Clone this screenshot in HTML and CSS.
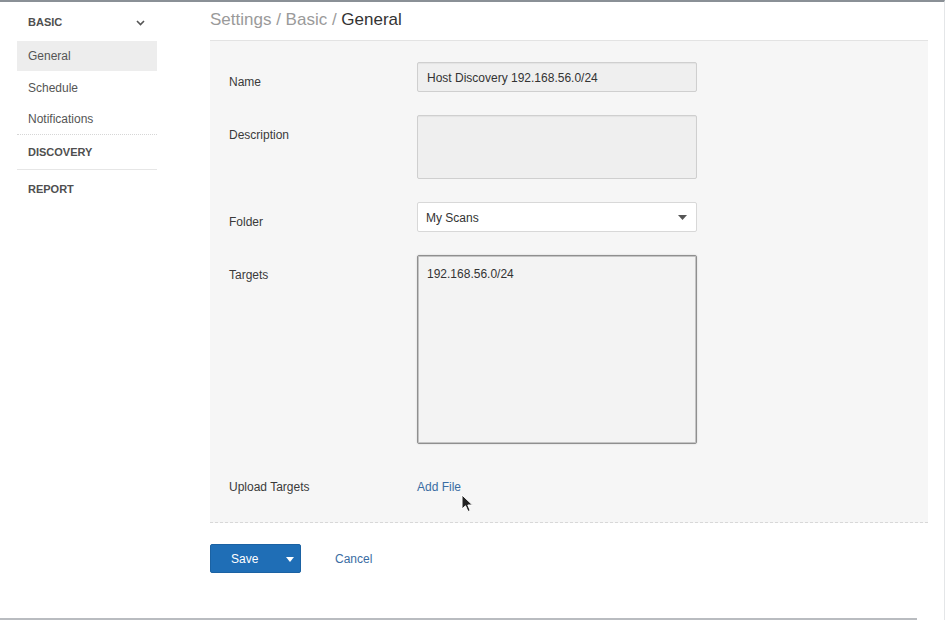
FILE: index.html
```html
<!DOCTYPE html>
<html>
<head>
<meta charset="utf-8">
<link rel="stylesheet" href="styles.css">
</head>
<body>
<div class="frame">
  <div class="layout">
    <aside class="sidebar">
      <div class="sec-head top">
        <span>BASIC</span>
        <svg class="chev" width="9" height="6" viewBox="0 0 9 6"><path d="M1 1 L4.5 4.5 L8 1" fill="none" stroke="#555" stroke-width="1.6"/></svg>
      </div>
      <ul class="nav">
        <li class="active">General</li>
        <li>Schedule</li>
        <li>Notifications</li>
      </ul>
      <div class="sec-head sep">DISCOVERY</div>
      <div class="sec-head sep2">REPORT</div>
    </aside>
    <main class="main">
      <h1 class="crumbs"><span class="dim">Settings / Basic / </span>General</h1>
      <section class="panel">
        <div class="row">
          <label class="lbl">Name</label>
          <div class="field input ro">Host Discovery 192.168.56.0/24</div>
        </div>
        <div class="row">
          <label class="lbl">Description</label>
          <div class="field textarea ro desc"></div>
        </div>
        <div class="row">
          <label class="lbl">Folder</label>
          <div class="field input select">
            <span>My Scans</span>
            <svg width="9" height="5" viewBox="0 0 9 5"><path d="M0 0 H9 L4.5 5 Z" fill="#555"/></svg>
          </div>
        </div>
        <div class="row">
          <label class="lbl">Targets</label>
          <div class="field textarea targets">192.168.56.0/24</div>
        </div>
        <div class="row">
          <label class="lbl">Upload Targets</label>
          <a class="link addfile">Add File</a>
        </div>
      </section>
      <div class="actions">
        <button class="btn-save"><span>Save</span><svg width="8" height="5" viewBox="0 0 8 5"><path d="M0 0 H8 L4 5 Z" fill="#fff"/></svg></button>
        <a class="link cancel">Cancel</a>
      </div>
    </main>
  </div>
  <div class="bottom-bar"></div>
  <svg class="cursor" width="13" height="20" viewBox="0 0 13 20"><path d="M1 1 L1 15 L4.5 11.8 L7 17.5 L9.2 16.5 L6.8 11 L11.5 11 Z" fill="#222" stroke="#fff" stroke-width="1"/></svg>
</div>
</body>
</html>
```
FILE: styles.css
```css
* { box-sizing: border-box; }
html, body { margin: 0; padding: 0; background: #fff; }
body {
  font-family: "Liberation Sans", Arial, sans-serif;
  font-size: 12px;
  color: #333;
}
.frame {
  position: relative;
  width: 945px;
  height: 620px;
  border-top: 2px solid #8a9096;
  border-right: 1px solid #e4e6e8;
  display: flex;
  flex-direction: column;
  overflow: hidden;
}
.layout {
  display: flex;
  flex: 1;
}
.sidebar {
  width: 157px;
  padding-left: 17px;
  flex: none;
}
.sec-head {
  height: 39px;
  padding-left: 11px;
  padding-right: 12px;
  display: flex;
  align-items: center;
  justify-content: space-between;
  font-size: 11px;
  font-weight: bold;
  color: #4f4f4f;
}
.sec-head.top { padding-top: 1px; }
.sec-head.sep {
  height: 36px;
  padding-top: 0;
  border-top: 1px dotted #d6d6d6;
  border-bottom: 1px solid #e6e6e6;
}
.sec-head.sep2 { height: 36px; padding-top: 2px; }
.chev { margin-top: 1px; }
.nav { list-style: none; margin: 0; padding: 0; }
.nav li {
  height: 31px;
  line-height: 33px;
  padding-left: 11px;
  color: #555;
  font-size: 12px;
}
.nav li.active {
  background: #ededed;
  height: 30px;
  line-height: 31px;
  margin-bottom: 1px;
}
.main {
  margin-left: 53px;
  width: 718px;
}
.crumbs {
  margin: 0;
  height: 38px;
  line-height: 35px;
  font-size: 17px;
  font-weight: normal;
  color: #333;
}
.crumbs .dim { color: #9a9a9a; }
.panel {
  background: #f6f6f6;
  border-top: 1px solid #e3e3e3;
  border-bottom: 1px dashed #d8d8d8;
  padding: 21px 0 27px 0;
  display: flex;
  flex-direction: column;
  gap: 23px;
}
.row {
  display: grid;
  grid-template-columns: 207px 280px;
  align-items: start;
}
.lbl {
  padding-left: 19px;
  padding-top: 13px;
  line-height: 15px;
  color: #3a3a3a;
}
.field {
  border: 1px solid #d2d2d2;
  border-radius: 2px;
  color: #333;
  font-size: 12px;
}
.input {
  height: 30px;
  line-height: 30px;
  padding: 0 10px 0 9px;
}
.ro {
  background: #efefef;
  border-color: #cfcfcf;
  box-shadow: inset 0 1px 1px rgba(0,0,0,0.05);
}
.desc { height: 64px; }
.select {
  background: #fff;
  border-color: #d8d8d8;
  display: flex;
  align-items: center;
  justify-content: space-between;
  padding: 0 8px 0 8px;
}
.select span { padding-top: 1px; }
.select svg { margin-right: 1px; margin-top: 1px; }
.textarea { padding: 11px 10px 11px 9px; line-height: 14px; }
.targets {
  height: 189px;
  background: #f3f3f3;
  border: 1px solid #8f8f8f;
  box-shadow: inset 0 0 0 1px #c4c4c4, 0 0 2px rgba(0,0,0,0.15);
}
.link { color: #3a6da3; text-decoration: none; cursor: pointer; }
.addfile { padding-top: 13px; line-height: 15px; }
.actions {
  display: flex;
  align-items: center;
  margin-top: 21px;
}
.btn-save {
  width: 91px;
  height: 29px;
  background: #1f6eb6;
  border: 1px solid #1b62a3;
  border-radius: 2px;
  color: #fff;
  font-family: "Liberation Sans", Arial, sans-serif;
  font-size: 12px;
  display: flex;
  align-items: center;
  padding: 1px 0 0 20px;
}
.btn-save span { width: 55px; text-align: left; }
.cancel { margin-left: 34px; font-size: 12px; }
.bottom-bar {
  height: 2px;
  width: 917px;
  background: #b9bcc0;
  flex: none;
}
.cursor {
  position: absolute;
  left: 461px;
  top: 492px;
}
```
